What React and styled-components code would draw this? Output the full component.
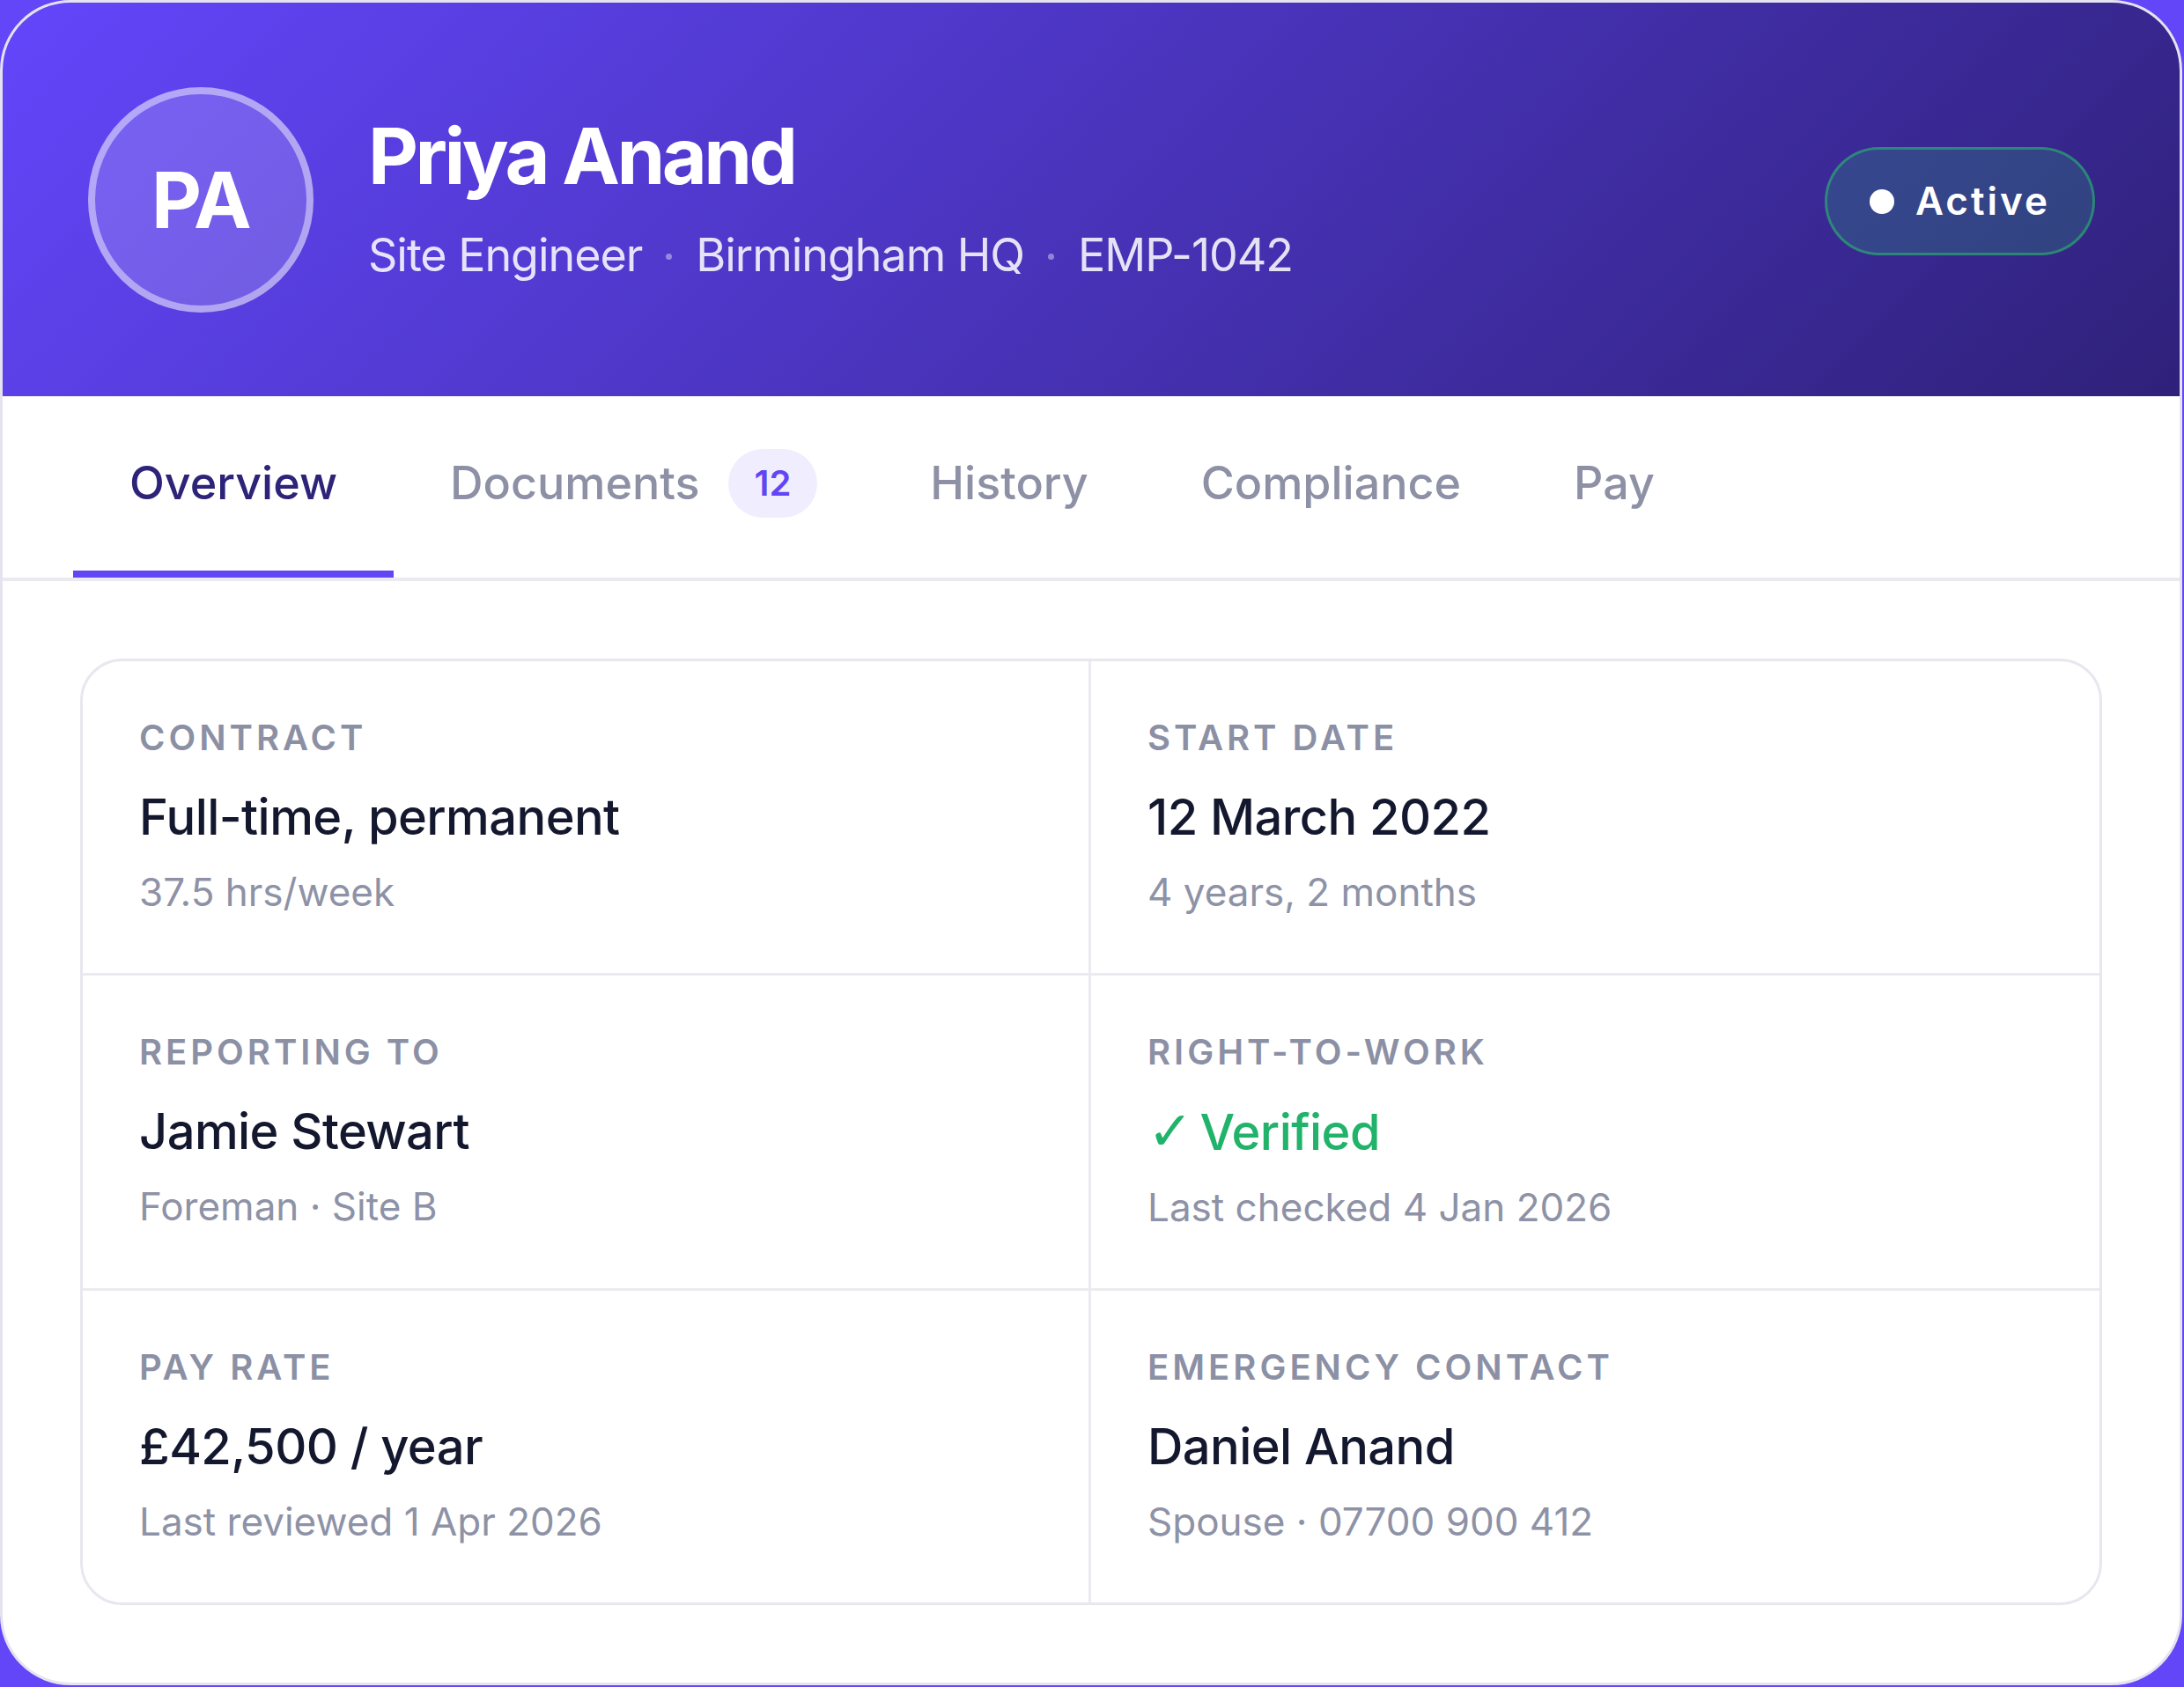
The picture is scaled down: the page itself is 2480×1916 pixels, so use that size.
import React from 'react'
import styled, { createGlobalStyle } from 'styled-components'

const GlobalStyle = createGlobalStyle`
  html, body {
    margin: 0;
    padding: 0;
  }
  body {
    background: #6246f7;
    font-family: "Inter", "Noto Sans", sans-serif;
    -webkit-font-smoothing: antialiased;
  }
`

const Card = styled.div`
  width: 2478px;
  box-sizing: border-box;
  background: #ffffff;
  border: 3px solid #e5e3ef;
  border-radius: 80px;
  overflow: hidden;
`

const Header = styled.header`
  height: 447px;
  box-sizing: border-box;
  padding: 0 96px 0 97px;
  display: flex;
  align-items: center;
  background: linear-gradient(135deg, #6346fb 0%, #2f217a 100%);
`

const Avatar = styled.div`
  width: 256px;
  height: 256px;
  flex-shrink: 0;
  box-sizing: border-box;
  border-radius: 50%;
  border: 8px solid rgba(255, 255, 255, 0.45);
  background: rgba(255, 255, 255, 0.16);
  display: flex;
  align-items: center;
  justify-content: center;
  color: #ffffff;
  font-size: 88px;
  font-weight: 700;
  letter-spacing: -0.02em;
`

const Identity = styled.div`
  flex: 1;
  margin-left: 62px;
  margin-top: -6px;
  display: flex;
  flex-direction: column;
`

const Name = styled.h1`
  margin: 0;
  color: #ffffff;
  font-size: 88px;
  line-height: 100px;
  font-weight: 700;
  letter-spacing: -0.04em;
`

const Meta = styled.div`
  margin-top: 32px;
  display: flex;
  align-items: center;
  color: rgba(255, 255, 255, 0.86);
  font-size: 52px;
  line-height: 62px;
  letter-spacing: -0.02em;
`

const MetaDot = styled.span`
  width: 7px;
  height: 7px;
  margin: 4px 27px 0;
  border-radius: 50%;
  background: rgba(255, 255, 255, 0.4);
`

const StatusPill = styled.div`
  display: flex;
  align-items: center;
  gap: 24px;
  margin-top: 4px;
  padding: 32px 48px;
  border: 3px solid rgba(40, 190, 110, 0.55);
  background: rgba(40, 190, 110, 0.2);
  border-radius: 999px;
  color: #ffffff;
  font-size: 44px;
  line-height: 53px;
  font-weight: 600;
  letter-spacing: 3px;
`

const StatusDot = styled.span`
  width: 28px;
  height: 28px;
  border-radius: 50%;
  background: #ffffff;
`

const TabBar = styled.nav`
  display: flex;
  padding: 0 80px;
  border-bottom: 4px solid #ebeaf1;
`

const Tab = styled.div`
  display: flex;
  align-items: center;
  gap: 32px;
  padding: 68px 64px;
  border-bottom: 8px solid ${p => (p.$active ? '#6246f6' : 'transparent')};
  color: ${p => (p.$active ? '#2d2479' : '#8e91a6')};
  font-size: 52px;
  line-height: 62px;
  font-weight: 500;
`

const Badge = styled.span`
  margin: -8px 0;
  padding: 12px 30px;
  border-radius: 999px;
  background: #f0eefe;
  color: #6246f6;
  font-size: 40px;
  line-height: 54px;
  font-weight: 600;
`

const Body = styled.main`
  padding: 88px;
`

const InfoGrid = styled.section`
  display: grid;
  grid-template-columns: 1fr 1fr;
  border: 3px solid #e8e7ef;
  border-radius: 48px;
  overflow: hidden;
`

const Cell = styled.div`
  padding: 63px 64px;
  border-right: ${p => (p.$left ? '3px solid #ebeaf0' : 'none')};
  border-bottom: ${p => (p.$lastRow ? 'none' : '3px solid #ebeaf0')};
`

const Label = styled.div`
  color: #8c90a5;
  font-size: 40px;
  line-height: 48px;
  font-weight: 600;
  letter-spacing: 4px;
  text-transform: uppercase;
`

const Value = styled.div`
  margin-top: 32px;
  color: ${p => (p.$ok ? '#22b36b' : '#14182e')};
  font-size: 56px;
  line-height: 68px;
  font-weight: 500;
  letter-spacing: -0.01em;
`

const Check = styled.span`
  margin-right: 8px;
  font-family: "DejaVu Sans", sans-serif;
  font-weight: 700;
  font-size: 62px;
`

const Sub = styled.div`
  margin-top: 22px;
  color: #8e92a6;
  font-size: 44px;
  line-height: 58px;
`

const tabs = [
  { label: 'Overview', active: true },
  { label: 'Documents', count: 12 },
  { label: 'History' },
  { label: 'Compliance' },
  { label: 'Pay' },
]

const details = [
  { label: 'Contract', value: 'Full-time, permanent', sub: '37.5 hrs/week' },
  { label: 'Start date', value: '12 March 2022', sub: '4 years, 2 months' },
  { label: 'Reporting to', value: 'Jamie Stewart', sub: 'Foreman · Site B' },
  { label: 'Right-to-work', value: 'Verified', sub: 'Last checked 4 Jan 2026', ok: true },
  { label: 'Pay rate', value: '£42,500 / year', sub: 'Last reviewed 1 Apr 2026' },
  { label: 'Emergency contact', value: 'Daniel Anand', sub: 'Spouse · 07700 900 412' },
]

export default function App() {
  return (
    <>
      <GlobalStyle />
      <Card>
        <Header>
          <Avatar>PA</Avatar>
          <Identity>
            <Name>Priya Anand</Name>
            <Meta>
              <span>Site Engineer</span>
              <MetaDot />
              <span>Birmingham HQ</span>
              <MetaDot />
              <span>EMP-1042</span>
            </Meta>
          </Identity>
          <StatusPill>
            <StatusDot />
            Active
          </StatusPill>
        </Header>

        <TabBar>
          {tabs.map(t => (
            <Tab key={t.label} $active={t.active}>
              {t.label}
              {t.count && <Badge>{t.count}</Badge>}
            </Tab>
          ))}
        </TabBar>

        <Body>
          <InfoGrid>
            {details.map((d, i) => (
              <Cell key={d.label} $left={i % 2 === 0} $lastRow={i >= details.length - 2}>
                <Label>{d.label}</Label>
                <Value $ok={d.ok}>
                  {d.ok && <Check>✓</Check>}
                  {d.value}
                </Value>
                <Sub>{d.sub}</Sub>
              </Cell>
            ))}
          </InfoGrid>
        </Body>
      </Card>
    </>
  )
}
